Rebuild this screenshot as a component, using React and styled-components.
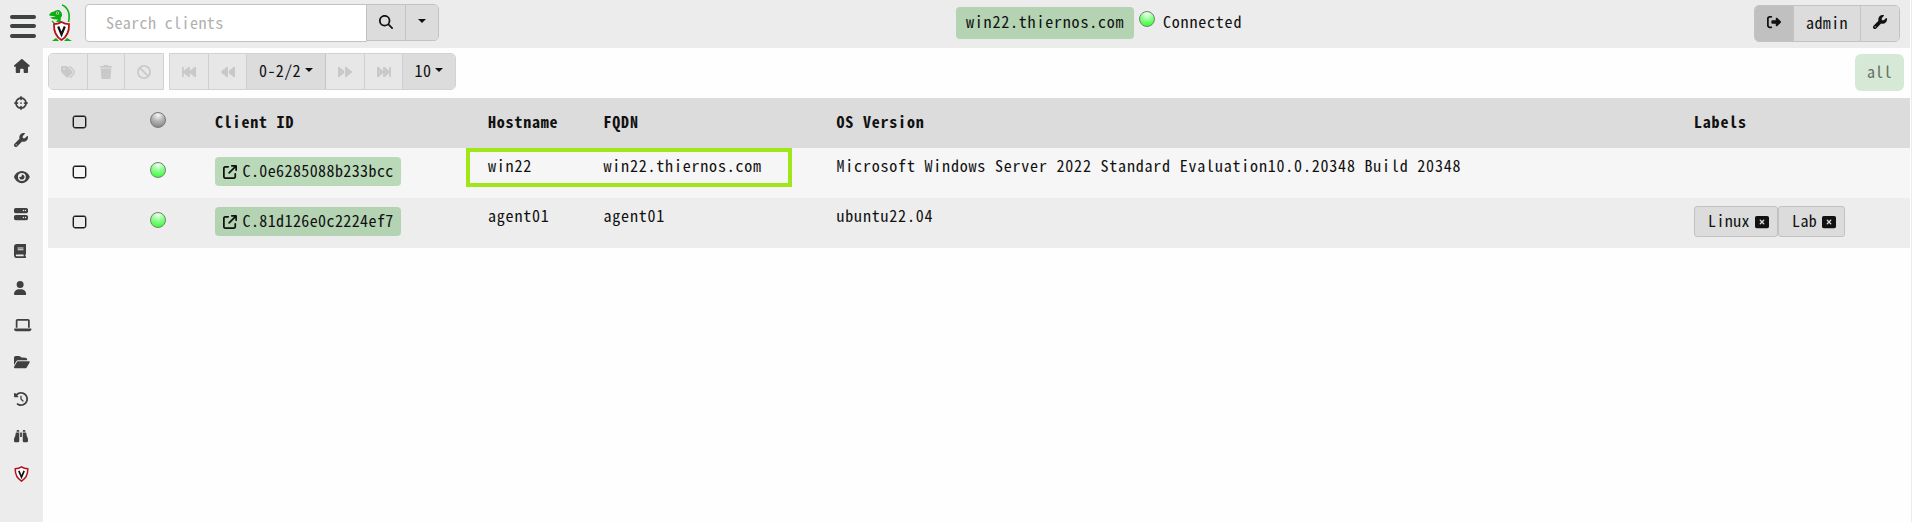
import React from "react";
import styled, { createGlobalStyle, css } from "styled-components";
import {
  FaHouse, FaCrosshairs, FaWrench, FaEye, FaServer, FaBook, FaUser, FaLaptop,
  FaFolderOpen, FaClockRotateLeft, FaBinoculars, FaTags, FaTrash, FaBan,
  FaBackwardFast, FaBackward, FaForward, FaForwardFast, FaMagnifyingGlass,
  FaRightFromBracket, FaArrowUpRightFromSquare, FaRectangleXmark,
} from "react-icons/fa6";

const GlobalStyle = createGlobalStyle`
  *, *::before, *::after { box-sizing: border-box; }
  body {
    margin: 0;
    background: #fefefe;
    color: #111;
    font-family: "Noto Sans Mono CJK SC", "DejaVu Sans Mono", monospace;
    font-size: 16px;
    line-height: 24px;
    letter-spacing: 0.8px;
  }
  button, input { font: inherit; letter-spacing: 0.4px; color: inherit; margin: 0; }
  svg { display: block; flex: none; }
`;

const Page = styled.div`
  height: 522px;
  padding-right: 2px;
  overflow: hidden;
  background: linear-gradient(#ececec, #ececec) right / 1px 100% no-repeat;
`;

const TopBar = styled.header`
  display: flex;
  justify-content: space-between;
  height: 48px;
  background: #ececec;
`;

const TopSection = styled.div`
  display: flex;
  align-items: flex-start;
  width: ${(p) => p.$width};
`;

const MenuButton = styled.button`
  display: flex;
  flex-direction: column;
  gap: 5.5px;
  width: 26px;
  margin: 14.5px 13px 0 10px;
  padding: 0;
  border: 0;
  background: none;
`;

const MenuBar = styled.span`
  height: 4px;
  border-radius: 2px;
  background: #404242;
`;

const Logo = styled.svg`
  width: 24px;
  height: 38px;
  margin: 4px 12px 0 0;
`;

const SearchInput = styled.input`
  width: 282px;
  height: 38px;
  padding: 0 20px 2px;
  border: 1px solid #c2c2c2;
  border-radius: 4px 0 0 4px;
  background: #fff;
  outline: 0;
  &::placeholder { color: #b0b0b0; opacity: 1; }
`;

const Search = styled.div`
  display: flex;
  align-items: flex-start;
  margin-top: 4px;
`;

const ButtonGroup = styled.div`
  display: flex;
  height: 37px;
  margin: ${(p) => p.$margin || 0};
  border: 1px solid #c2c2c2;
  border-radius: ${(p) => p.$radius || "0"};
  overflow: hidden;
  ${(p) => p.$faded && css`border-color: #d2d2d2;`}
`;

const ToolButton = styled.button`
  display: flex;
  align-items: center;
  justify-content: center;
  gap: 4px;
  width: ${(p) => p.$width}px;
  padding: ${(p) => p.$padding || 0};
  border: 0;
  border-right: 1px solid #c4c4c4;
  background: ${(p) => (p.$active ? "#c0c0c0" : "#dcdcdc")};
  &:last-child { border-right: 0; }
  &:disabled { background: #e7e7e7; color: #c9c9c9; border-right-color: #cfcfcf; }
`;

const Caret = styled.span`
  border: 4px solid transparent;
  border-top-color: #111;
  border-bottom: 0;
  margin-bottom: ${(p) => p.$lift || 0}px;
`;

const HostPill = styled.span`
  height: 32px;
  margin-top: 7px;
  padding: 2px 10px 0;
  width: 178px;
  border-radius: 4px;
  background: #b3d3b3;
  white-space: nowrap;
`;

const Orb = styled.span`
  flex: none;
  width: 16px;
  height: 16px;
  margin: ${(p) => p.$margin || 0};
  border: 1px solid ${(p) => (p.$online ? "#718571" : "#777")};
  border-radius: 50%;
  background: ${(p) =>
    p.$online
      ? "radial-gradient(circle at 50% 15%, #e8ffe8 5%, #8cff8c 45%, #2eff2e 90%)"
      : "radial-gradient(circle at 50% 15%, #f0f0f0 5%, #b4b4b4 45%, #808080 95%)"};
`;

const StatusText = styled.span`
  margin-top: 9px;
`;

const Body = styled.div`
  display: flex;
  height: 474px;
`;

const Sidebar = styled.nav`
  width: 43px;
  margin-top: -1px;
  padding-left: 14px;
  background: #ececec;
  color: #404040;
  font-size: 14px;
`;

const NavItem = styled.a`
  display: flex;
  align-items: center;
  height: 37px;
  svg { width: ${(p) => p.$icon}px; height: 14px; }
`;

const ShieldItem = styled.a`
  display: block;
  padding-top: 12px;
`;

const Main = styled.main`
  flex: 1;
  padding-left: 5px;
`;

const Toolbar = styled.div`
  display: flex;
  height: 50px;
  padding: 5px 6px 0 0;
`;

const AllFilter = styled.button`
  width: 49px;
  height: 37px;
  margin: 1px 0 0 auto;
  padding: 0 0 4px;
  border: 0;
  border-radius: 6px;
  background: #d6e9d6;
  color: #686f68;
`;

const Table = styled.div`
  position: relative;
`;

const Row = styled.div`
  display: grid;
  grid-template-columns: 62px 96px 282px 115.5px 233px 857.5px 1fr;
  height: 50px;
  background: ${(p) => p.$shade};
  font-weight: ${(p) => (p.$head ? 700 : 400)};
  white-space: nowrap;
`;

const Cell = styled.div`
  display: flex;
  align-items: flex-start;
  padding-top: ${(p) => p.$top}px;
  padding-left: ${(p) => p.$indent || 0}px;
  ${(p) => p.$center && css`justify-content: center;`}
`;

const CheckBox = styled.span`
  width: 13px;
  height: 12px;
  border: 1px solid #1a1a1a;
  border-radius: 2px;
  box-shadow: 0 0 0 0.4px #1a1a1a;
`;

const ClientLink = styled.a`
  display: flex;
  align-items: center;
  gap: 5.5px;
  width: 186px;
  height: 29px;
  padding: 0 8px;
  border-radius: 4px;
  background: ${(p) => p.$shade};
  letter-spacing: 0.4px;
`;

const Lifted = styled.span`
  padding-bottom: 4px;
`;

const Label = styled.span`
  display: flex;
  align-items: center;
  justify-content: space-between;
  width: ${(p) => p.$width}px;
  height: 31px;
  padding: 0 8px 0 13px;
  border: 1px solid #c2c2c2;
  border-radius: 3px;
  background: #dcdcdc;
  letter-spacing: 0.4px;
`;

const Highlight = styled.div`
  position: absolute;
  left: 418px;
  top: 49.5px;
  width: 326px;
  height: 39px;
  border: 4px solid #a0e619;
`;

const Shield = () => (
  <svg width={15} height={16} viewBox="0 0 16 18">
    <path d="M8 1 Q11 3 15 3 Q15.5 12 8 17 Q.5 12 1 3 Q5 3 8 1Z" fill="#fff" stroke="#b51218" strokeWidth="1.7" />
    <path d="M5 5.5 L8 12.5 L11 5.5" fill="none" stroke="#111" strokeWidth="1.9" />
  </svg>
);

const navIcons = [
  [FaHouse, 15.75], [FaCrosshairs, 14], [FaWrench, 14], [FaEye, 15.75],
  [FaServer, 14], [FaBook, 12.25], [FaUser, 12.25], [FaLaptop, 17.5],
  [FaFolderOpen, 15.75], [FaClockRotateLeft, 14], [FaBinoculars, 14],
];

const clients = [
  { id: "C.0e6285088b233bcc", host: "win22", fqdn: "win22.thiernos.com", os: "Microsoft Windows Server 2022 Standard Evaluation10.0.20348 Build 20348", labels: [], shade: "#f6f6f6", pill: "#b9d9b9" },
  { id: "C.81d126e0c2224ef7", host: "agent01", fqdn: "agent01", os: "ubuntu22.04", labels: [["Linux", 84], ["Lab", 67]], shade: "#ededed", pill: "#b3d3b3" },
];

export default function App() {
  return (
    <Page>
      <GlobalStyle />
      <TopBar>
        <TopSection $width="956px">
          <MenuButton aria-label="Menu"><MenuBar /><MenuBar /><MenuBar /></MenuButton>
          <Logo viewBox="0 0 24 38">
            <path d="M13 1 C19 3 21.5 10 19.5 18" fill="none" stroke="#0aaf10" strokeWidth="1.6" />
            <path d="M0 11.5 Q1 8 5 7.5 Q7 5.5 10 6 Q13.5 8 13 12 Q11 13.5 12 18 L7 18 L9 15.5 Q4 16 1 13.5 L7 12.5Z" fill="#0aaf10" />
            <circle cx="8.5" cy="9" r="1.5" fill="#e8f6e8" />
            <circle cx="8.5" cy="9" r=".8" fill="#123512" />
            <path d="M3 17 L6 20" stroke="#0aaf10" strokeWidth="1.3" />
            <path d="M3 37 L7 34 L10 37Z M15 37 L18 34 L23 37Z" fill="#0aaf10" />
            <path d="M12.5 18 Q16 20 20 20.2 Q20.5 31 12.5 36 Q4.5 31 5 20.2 Q9 20 12.5 18Z" fill="#fff" stroke="#b51218" strokeWidth="1.8" />
            <path d="M9.2 22.5 L12.5 30.5 L15.8 22.5" fill="none" stroke="#111" strokeWidth="2.2" />
          </Logo>
          <Search>
            <SearchInput placeholder="Search clients" />
            <ButtonGroup $radius="0 5px 5px 0" $margin="0 0 0 -1px">
              <ToolButton $width={39} $padding="0 0 2px"><FaMagnifyingGlass size={14} /></ToolButton>
              <ToolButton $width={32}><Caret $lift={4} /></ToolButton>
            </ButtonGroup>
          </Search>
        </TopSection>
        <TopSection $width="798px">
          <HostPill>win22.thiernos.com</HostPill>
          <Orb $online $margin="11px 8px 0 5px" />
          <StatusText>Connected</StatusText>
        </TopSection>
        <TopSection $width="156px">
          <ButtonGroup $radius="5px" $margin="5px 0 0">
            <ToolButton $width={39} $active $padding="0 0 4px"><FaRightFromBracket size={14} /></ToolButton>
            <ToolButton $width={67} $padding="0 0 4px">admin</ToolButton>
            <ToolButton $width={38} $padding="0 0 3px"><FaWrench size={14} /></ToolButton>
          </ButtonGroup>
        </TopSection>
      </TopBar>
      <Body>
        <Sidebar>
          {navIcons.map(([Icon, width], i) => <NavItem key={i} $icon={width}><Icon /></NavItem>)}
          <ShieldItem><Shield /></ShieldItem>
        </Sidebar>
        <Main>
          <Toolbar>
            <ButtonGroup $faded $radius="5px 0 0 5px">
              <ToolButton disabled $width={39}><FaTags size={14} /></ToolButton>
              <ToolButton disabled $width={37}><FaTrash size={14} /></ToolButton>
              <ToolButton disabled $width={38}><FaBan size={14} /></ToolButton>
            </ButtonGroup>
            <ButtonGroup $faded $radius="0 5px 5px 0" $margin="0 0 0 5px">
              <ToolButton disabled $width={39}><FaBackwardFast size={14} /></ToolButton>
              <ToolButton disabled $width={38}><FaBackward size={14} /></ToolButton>
              <ToolButton $width={79} $padding="0 0 4px">0-2/2<Caret /></ToolButton>
              <ToolButton disabled $width={39}><FaForward size={14} /></ToolButton>
              <ToolButton disabled $width={38}><FaForwardFast size={14} /></ToolButton>
              <ToolButton $width={52} $padding="0 0 4px">10<Caret /></ToolButton>
            </ButtonGroup>
            <AllFilter>all</AllFilter>
          </Toolbar>
          <Table>
            <Row $head $shade="#dcdcdc">
              <Cell $center $top={18}><CheckBox /></Cell>
              <Cell $center $top={14}><Orb /></Cell>
              {["Client ID", "Hostname", "FQDN", "OS Version", "Labels"].map((t, i) => <Cell key={t} $top={11} $indent={i ? 0 : 9}>{t}</Cell>)}
            </Row>
            {clients.map((c) => (
              <Row key={c.id} $shade={c.shade}>
                <Cell $center $top={18}><CheckBox /></Cell>
                <Cell $center $top={14}><Orb $online /></Cell>
                <Cell $top={9} $indent={9}><ClientLink $shade={c.pill}><FaArrowUpRightFromSquare size={14} /><Lifted>{c.id}</Lifted></ClientLink></Cell>
                <Cell $top={5}>{c.host}</Cell>
                <Cell $top={5}>{c.fqdn}</Cell>
                <Cell $top={5}>{c.os}</Cell>
                <Cell $top={8}>{c.labels.map(([t, w]) => <Label key={t} $width={w}><Lifted>{t}</Lifted><FaRectangleXmark size={14} /></Label>)}</Cell>
              </Row>
            ))}
            <Highlight />
          </Table>
        </Main>
      </Body>
    </Page>
  );
}
